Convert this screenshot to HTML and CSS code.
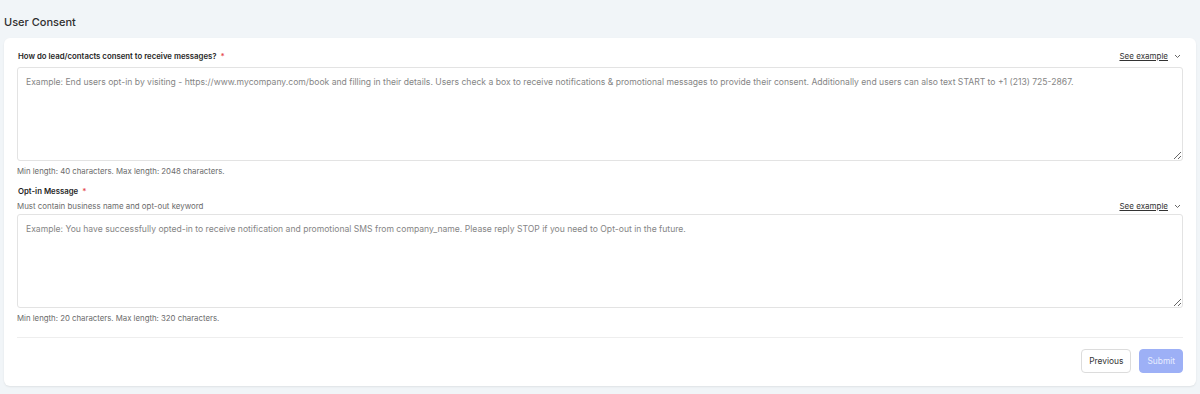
FILE: index.html
```html
<!DOCTYPE html>
<html lang="en">

<head>
  <meta charset="UTF-8">
  <meta name="viewport" content="width=device-width, initial-scale=1.0">
  <link rel="stylesheet" href="styles.css">
  <title>User Consent</title>
</head>

<body>
  <h1 class="page-title">User Consent</h1>
  <div class="card">
    <div class="field">
      <div class="field-head">
        <label class="label">How do lead/contacts consent to receive messages? <span class="req">*</span></label>
        <a class="example" href="#">See example
          <svg width="7" height="5" viewBox="0 0 7 5"><path d="M1 1l2.5 2.5L6 1" fill="none" stroke="#666" stroke-width="1"/></svg>
        </a>
      </div>
      <textarea class="box" placeholder="Example: End users opt-in by visiting - https://www.mycompany.com/book and filling in their details. Users check a box to receive notifications &amp; promotional messages to provide their consent. Additionally end users can also text START to +1 (213) 725-2867."></textarea>
      <div class="hint">Min length: 40 characters. Max length: 2048 characters.</div>
    </div>

    <div class="field field-2">
      <label class="label">Opt-in Message <span class="req">*</span></label>
      <div class="field-head sub-head">
        <span class="sub">Must contain business name and opt-out keyword</span>
        <a class="example" href="#">See example
          <svg width="7" height="5" viewBox="0 0 7 5"><path d="M1 1l2.5 2.5L6 1" fill="none" stroke="#666" stroke-width="1"/></svg>
        </a>
      </div>
      <textarea class="box" placeholder="Example: You have successfully opted-in to receive notification and promotional SMS from company_name. Please reply STOP if you need to Opt-out in the future."></textarea>
      <div class="hint">Min length: 20 characters. Max length: 320 characters.</div>
    </div>

    <div class="actions">
      <button class="btn btn-prev">Previous</button>
      <button class="btn btn-submit" disabled>Submit</button>
    </div>
  </div>
</body>

</html>
```

FILE: styles.css
```css
html {
  height: 100%;
}

body {
  margin: 0;
  height: 100%;
  background-color: #f1f5f8;
  font-family: Inter, "Liberation Sans", sans-serif;
  color: #2b2b2b;
}

.page-title {
  margin: 0;
  padding: 15px 4px 0;
  height: 23px;
  font-size: 11px;
  font-weight: 500;
  line-height: 14px;
  color: #2f2f2f;
}

.card {
  margin: 0 4px;
  height: 348px;
  box-sizing: border-box;
  background-color: #fff;
  border-radius: 6px;
  box-shadow: 0 1px 2px rgba(0, 0, 0, 0.08);
  padding: 12px 13px 0 13px;
}

.field-head {
  display: flex;
  justify-content: space-between;
  align-items: center;
  height: 12px;
  padding-bottom: 5px;
}

.label {
  font-size: 7.8px;
  font-weight: 600;
  line-height: 12px;
  color: #1f1f1f;
  padding-left: 1px;
}

.req {
  color: #e5484d;
  margin-left: 2px;
}

.example {
  display: flex;
  align-items: center;
  gap: 6px;
  font-size: 8px;
  color: #333;
  text-decoration: underline;
  padding-right: 2px;
}

.box {
  display: block;
  width: 100%;
  height: 94px;
  box-sizing: border-box;
  border: 1px solid #e3e3e3;
  border-radius: 3px;
  padding: 8px 8px;
  font-family: Inter, "Liberation Sans", sans-serif;
  font-size: 8.6px;
  line-height: 12px;
  color: #333;
  resize: vertical;
}

.box::placeholder {
  color: #858585;
}

.hint {
  font-size: 7.8px;
  line-height: 10px;
  color: #6b6b6b;
  padding-top: 5px;
}

.field-2 {
  padding-top: 9px;
}

.field-2 .label {
  display: block;
}

.sub-head {
  padding-top: 3px;
  padding-bottom: 2px;
}

.sub {
  font-size: 7.9px;
  color: #6b6b6b;
}

.actions {
  display: flex;
  justify-content: flex-end;
  gap: 8px;
  margin-top: 14px;
  padding-top: 11px;
  border-top: 1px solid #eeeeee;
}

.btn {
  height: 24px;
  border-radius: 4px;
  font-family: Inter, "Liberation Sans", sans-serif;
  font-size: 8.4px;
  font-weight: 400;
  padding: 0 7px;
}

.btn-prev {
  background-color: #fff;
  border: 1px solid #dcdcdc;
  color: #333;
}

.btn-submit {
  background-color: #9db0f6;
  border: 1px solid #9db0f6;
  color: #e8edff;
}
```
